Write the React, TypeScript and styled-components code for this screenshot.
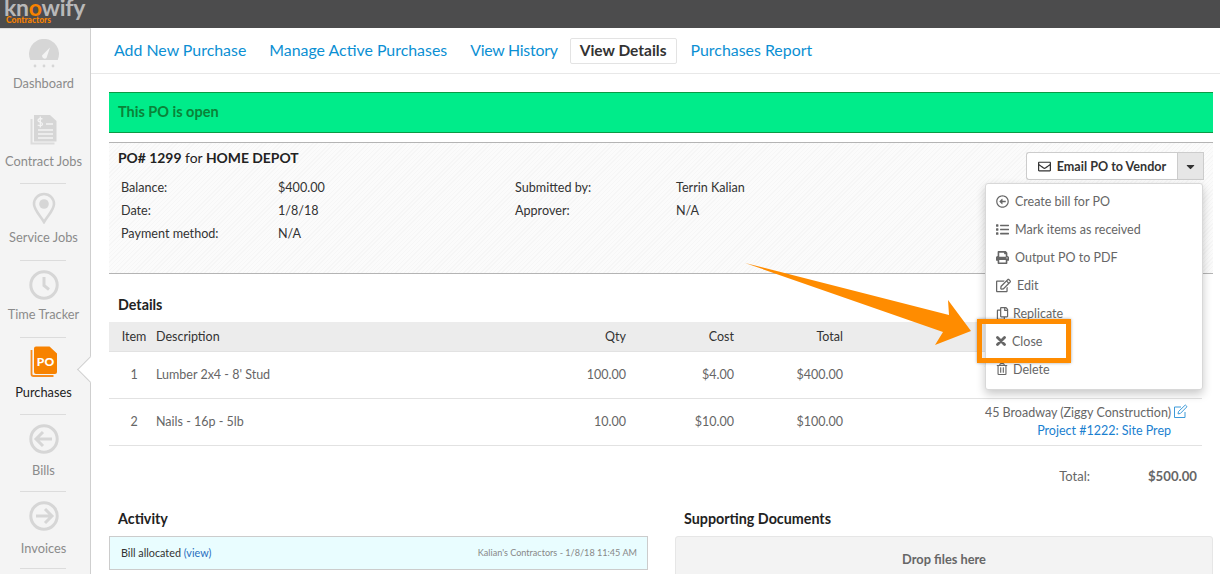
import React from "react";
import styled, { createGlobalStyle } from "styled-components";
import {
	FaCaretDown,
	FaList,
	FaPrint,
	FaRegArrowAltCircleLeft,
	FaRegCopy,
	FaRegEdit,
	FaRegEnvelope,
	FaRegTrashAlt,
} from "react-icons/fa";

const navItems = [
	{ label: "Dashboard", icon: <GaugeIcon />, pad: 8, gap: 4 },
	{ label: "Contract Jobs", icon: <ContractIcon />, pad: 7, gap: 6 },
	{ label: "Service Jobs", icon: <PinIcon />, pad: 8, gap: 4 },
	{ label: "Time Tracker", icon: <ClockIcon />, pad: 8, gap: 4 },
	{ label: "Purchases", icon: <PoIcon />, pad: 8, gap: 5, active: true },
	{ label: "Bills", icon: <ArrowCircleIcon dir="left" />, pad: 8, gap: 6 },
	{ label: "Invoices", icon: <ArrowCircleIcon dir="right" />, pad: 8, gap: 7 },
];

const tabs = ["Add New Purchase", "Manage Active Purchases", "View History", "View Details", "Purchases Report"];

const menuItems = [
	{ label: "Create bill for PO", icon: <FaRegArrowAltCircleLeft />, size: 13, gap: 6 },
	{ label: "Mark items as received", icon: <FaList />, size: 13, gap: 6 },
	{ label: "Output PO to PDF", icon: <FaPrint />, size: 13, gap: 6 },
	{ label: "Edit", icon: <FaRegEdit />, size: 15, gap: 6 },
	{ label: "Replicate", icon: <FaRegCopy />, size: 13, gap: 4 },
	{ label: "Close", icon: <CrossIcon />, size: 10, gap: 6 },
	{ label: "Delete", icon: <FaRegTrashAlt />, size: 12, gap: 5 },
];

function CrossIcon() {
	return (
		<svg viewBox="0 0 10 10" width="10" height="10">
			<path d="M1.500 1.500l7 7M8.500 1.500l-7 7" stroke="currentColor" strokeWidth="2.800" strokeLinecap="round" />
		</svg>
	);
}

function GaugeIcon() {
	return (
		<svg width="30" height="30" viewBox="0 0 30 30">
			<path d="M1.300 21A15 15 0 1 1 28.700 21z" fill="#d6d6d6" />
			<path d="M13 16.500l8-8-3.500 10.500a2.800 2.800 0 0 1-4.500-2.500z" fill="#f4f4f4" />
			<circle cx="6" cy="27" r="1.400" fill="#d6d6d6" />
			<circle cx="15" cy="27" r="1.400" fill="#d6d6d6" />
			<circle cx="24" cy="27" r="1.400" fill="#d6d6d6" />
		</svg>
	);
}

function ContractIcon() {
	return (
		<svg width="30" height="32" viewBox="0 0 30 32">
			<path d="M2.500 5v24.500h23" fill="none" stroke="#dcdcdc" strokeWidth="2" />
			<path d="M5 1h16l6.500 6v20.500H5z" fill="#d6d6d6" />
			<path d="M17 10h7M9 16h15M9 20h15M9 24h15" stroke="#f4f4f4" strokeWidth="1.700" />
			<path d="M13.500 5c-2-1-4.500-.5-4.500 1.500s4.500 1.500 4.500 3.500-2.800 2-4.800 1M11.300 2.500v11" fill="none" stroke="#f4f4f4" strokeWidth="1.300" />
		</svg>
	);
}

function PinIcon() {
	return (
		<svg width="24" height="32" viewBox="0 0 24 32">
			<path d="M12 30C8 23 2 18 2 12a10 10 0 0 1 20 0c0 6-6 11-10 18z" fill="none" stroke="#d6d6d6" strokeWidth="2.600" />
			<circle cx="12" cy="12" r="4.800" fill="#d6d6d6" />
		</svg>
	);
}

function ClockIcon() {
	return (
		<svg width="30" height="30" viewBox="0 0 30 30">
			<circle cx="15" cy="15" r="13.200" fill="none" stroke="#d6d6d6" strokeWidth="3" />
			<path d="M15 7v8.500l5 4" fill="none" stroke="#d6d6d6" strokeWidth="3" />
		</svg>
	);
}

function PoIcon() {
	return (
		<svg width="28" height="32" viewBox="0 0 28 32">
			<path d="M1.500 4v24a2 2 0 0 0 2 2h20" fill="none" stroke="#f78c1e" strokeWidth="1.800" />
			<path d="M6 .5h13.500l7.500 7V26a2 2 0 0 1-2 2H6a2 2 0 0 1-2-2V2.500a2 2 0 0 1 2-2z" fill="#f78200" />
			<PoLabel x="15.500" y="19.500" textAnchor="middle">PO</PoLabel>
		</svg>
	);
}

function ArrowCircleIcon({ dir }: { dir: "left" | "right" }) {
	return (
		<svg width="30" height="30" viewBox="0 0 30 30">
			<circle cx="15" cy="15" r="13.200" fill="none" stroke="#d6d6d6" strokeWidth="3" />
			<path
				d={dir === "left" ? "M23 15H8M14 8l-7 7 7 7" : "M7 15h15M16 8l7 7-7 7"}
				fill="none"
				stroke="#d6d6d6"
				strokeWidth="3"
			/>
		</svg>
	);
}

function LineItem({ no, desc, qty, cost, total }: { no: number; desc: string; qty: string; cost: string; total: string }) {
	return (
		<Row>
			<ItemNo>{no}</ItemNo>
			<span>{desc}</span>
			<Num>{qty}</Num>
			<Num>{cost}</Num>
			<Num>{total}</Num>
			<Alloc>
				45 Broadway (Ziggy Construction)
				<AllocLink>Project #1222: Site Prep</AllocLink>
			</Alloc>
			<EditIcon>
				<svg width="15" height="15" viewBox="0 0 15 15">
					<path d="M12 8v5.500H1.500V3H8M5.500 7.500L12.300 1 14 2.700 7.300 9.500l-2.300.4z" fill="none" stroke="#3d9ad9" strokeWidth="1" />
				</svg>
			</EditIcon>
		</Row>
	);
}

export default function App() {
	return (
		<Page>
			<GlobalStyle />
			<TopBar>
				<Logo>
					<LogoWord>
						kn
						<LogoO>
							o
							<Crown width="10" height="4" viewBox="0 0 10 4">
								<path d="M0 0l2.500 2L5 0l2.500 2L10 0 9 4H1z" fill="#f78200" />
							</Crown>
						</LogoO>
						wify
					</LogoWord>
					<LogoSub>Contractors</LogoSub>
				</Logo>
			</TopBar>

			<Body>
				<Sidebar>
					{navItems.map((item) => (
						<NavItem key={item.label} $active={item.active} $pad={item.pad}>
							<NavIcon $gap={item.gap}>{item.icon}</NavIcon>
							{item.label}
						</NavItem>
					))}
				</Sidebar>

				<Main>
					<Tabs>
						{tabs.map((tab) => (
							<Tab key={tab} $active={tab === "View Details"}>{tab}</Tab>
						))}
					</Tabs>

					<Content>
						<Banner>This PO is open</Banner>

						<PoCard>
							<PoTitle><b>PO# 1299</b> for <b>HOME DEPOT</b></PoTitle>
							<Facts>
								<span>Balance:</span><span>$400.00</span><span>Submitted by:</span><span>Terrin Kalian</span>
								<span>Date:</span><span>1/8/18</span><span>Approver:</span><span>N/A</span>
								<span>Payment method:</span><span>N/A</span>
							</Facts>
							<EmailGroup>
								<EmailButton><FaRegEnvelope /> Email PO to Vendor</EmailButton>
								<CaretButton><FaCaretDown /></CaretButton>
							</EmailGroup>
							<Menu>
								{menuItems.map((item) => (
									<MenuItem key={item.label} $gap={item.gap} $size={item.size}>
										{item.icon}
										{item.label}
									</MenuItem>
								))}
							</Menu>
						</PoCard>

						<Heading $top={21}>Details</Heading>
						<Table>
							<HeadRow>
								<ItemNo>Item</ItemNo>
								<span>Description</span>
								<Num>Qty</Num>
								<Num>Cost</Num>
								<Num>Total</Num>
							</HeadRow>
							<LineItem no={1} desc="Lumber 2x4 - 8' Stud" qty="100.00" cost="$4.00" total="$400.00" />
							<LineItem no={2} desc="Nails - 16p - 5lb" qty="10.00" cost="$10.00" total="$100.00" />
						</Table>

						<TotalRow>
							<span>Total:</span>
							<b>$500.00</b>
						</TotalRow>

						<Columns>
							<div>
								<Heading $top={1}>Activity</Heading>
								<ActivityBox>
									<span>Bill allocated <ActivityLink>(view)</ActivityLink></span>
									<ActivityMeta>Kalian's Contractors - 1/8/18 11:45 AM</ActivityMeta>
								</ActivityBox>
							</div>
							<div>
								<Heading $top={1}>Supporting Documents</Heading>
								<DropBox>Drop files here</DropBox>
							</div>
						</Columns>
					</Content>
				</Main>
			</Body>

			<Callout width="340" height="110" viewBox="0 0 340 110">
				<polygon points="5,3 209,55 208,40 231,71 195,85 203,72" fill="#ff8c00" />
			</Callout>
			<Highlight />
		</Page>
	);
}

const GlobalStyle = createGlobalStyle`
	html, body {
		margin: 0;
		height: 100%;
		overflow: hidden;
		background: #fff;
	}
	body {
		font-family: Lato, "Liberation Sans", sans-serif;
		color: #333;
	}
`;

const Page = styled.div`
	position: relative;
	width: 1220px;
	height: 574px;
	overflow: hidden;
`;

const TopBar = styled.header`
	height: 28px;
	background: #4c4c4d;
	overflow: hidden;
`;

const Logo = styled.div`
	padding-left: 4px;
	margin-top: -4px;
`;

const LogoWord = styled.div`
	font-size: 23px;
	line-height: 23px;
	font-weight: 700;
	letter-spacing: -0.3px;
	color: #b8b8b8;
`;

const LogoO = styled.span`
	position: relative;
	color: #f78200;
`;

const Crown = styled.svg`
	position: absolute;
	left: 2px;
	top: 3px;
`;

const LogoSub = styled.div`
	font-size: 8.500px;
	line-height: 8px;
	font-weight: 900;
	color: #f78200;
	margin: -3px 0 0 2px;
`;

const Body = styled.div`
	display: flex;
	height: 546px;
`;

const Sidebar = styled.nav`
	position: relative;
	width: 90px;
	flex: none;
	background: #f4f4f4;
	border-right: 1px solid #cfcfcf;
	border-top: 1px solid #dcdcdc;
`;

const NavItem = styled.div<{ $active?: boolean; $pad: number }>`
	position: relative;
	height: 77px;
	box-sizing: border-box;
	padding: ${(p) => p.$pad}px 3px 0 0;
	display: flex;
	flex-direction: column;
	align-items: center;
	font-size: 12.800px;
	line-height: 16px;
	color: ${(p) => (p.$active ? "#222" : "#8b8b8b")};

	&:not(:first-child)::before {
		content: "";
		position: absolute;
		left: 20px;
		right: 24px;
		bottom: -1px;
		border-bottom: 1px solid #dcdcdc;
	}

	${(p) =>
		p.$active &&
		`
		&::after {
			content: "";
			position: absolute;
			right: -10px;
			top: 23px;
			width: 18px;
			height: 18px;
			background: #fff;
			border-left: 1px solid #cfcfcf;
			border-bottom: 1px solid #cfcfcf;
			transform: rotate(45deg);
		}
	`}
`;

const NavIcon = styled.div<{ $gap: number }>`
	height: 34px;
	margin-bottom: ${(p) => p.$gap}px;
	display: flex;
	align-items: center;
	justify-content: center;
`;

const PoLabel = styled.text`
	font-family: Lato, sans-serif;
	font-size: 12px;
	font-weight: 900;
	fill: #fff;
`;

const Main = styled.main`
	flex: 1;
	min-width: 0;
`;

const Tabs = styled.div`
	height: 45px;
	padding-left: 12px;
	display: flex;
	align-items: center;
	gap: 1px;
	border-bottom: 1px solid #e8e8e8;
`;

const Tab = styled.a<{ $active?: boolean }>`
	padding: 0 ${(p) => (p.$active ? 9 : 10)}px;
	height: 24px;
	line-height: 22px;
	font-size: ${(p) => (p.$active ? 15.5 : 15.9)}px;
	color: ${(p) => (p.$active ? "#333" : "#0b8fd3")};
	font-weight: ${(p) => (p.$active ? 700 : 400)};
	border: 1px solid ${(p) => (p.$active ? "#e3e3e3" : "transparent")};
	border-radius: 2px;

	&:nth-child(3) {
		letter-spacing: -0.25px;
	}

	&:last-child {
		margin-left: 2px;
	}
`;

const Content = styled.div`
	padding: 18px 7px 0 18px;
`;

const Banner = styled.div`
	height: 41px;
	box-sizing: border-box;
	padding: 0 0 2px 9px;
	display: flex;
	align-items: center;
	background: #00ec8a;
	border-top: 1px solid #0c9a44;
	border-bottom: 1px solid #0c9a44;
	color: #0a8238;
	font-size: 14.500px;
	font-weight: 700;
`;

const PoCard = styled.section`
	position: relative;
	height: 132px;
	box-sizing: border-box;
	margin-top: 9px;
	padding: 5px 9px 0;
	border-top: 1px solid #b4b4b4;
	border-bottom: 1px solid #b4b4b4;
	background: repeating-linear-gradient(135deg, #f6f6f6 0 1px, #fbfbfb 1px 3px);
`;

const PoTitle = styled.div`
	font-size: 13.900px;
	line-height: 20px;
	color: #222;
`;

const Facts = styled.div`
	margin: 8px 0 0 3px;
	display: grid;
	grid-template-columns: 157px 237px 161px auto;
	grid-auto-rows: 23px;
	align-items: center;
	font-size: 12.600px;
	color: #333;
`;

const EmailGroup = styled.div`
	position: absolute;
	top: 9px;
	right: 9px;
	display: flex;
	height: 28px;
`;

const EmailButton = styled.button`
	width: 151px;
	padding: 0;
	display: flex;
	align-items: center;
	justify-content: center;
	gap: 6px;
	background: #fff;
	border: 1px solid #ccc;
	border-right: none;
	border-radius: 3px 0 0 3px;
	font: 700 12.600px Lato, sans-serif;
	color: #333;

	svg {
		font-size: 13px;
	}
`;

const CaretButton = styled.button`
	width: 27px;
	padding: 0;
	display: flex;
	align-items: center;
	justify-content: center;
	background: #e6e6e6;
	border: 1px solid #ccc;
	color: #333;
	font-size: 13px;
`;

const Menu = styled.div`
	position: absolute;
	z-index: 2;
	top: 40px;
	right: 10px;
	width: 218px;
	box-sizing: border-box;
	padding: 3px 0 6px;
	background: #fff;
	border: 1px solid #d8d8d8;
	border-radius: 3px;
	box-shadow: 0 4px 10px rgba(0, 0, 0, 0.22);
`;

const MenuItem = styled.div<{ $gap: number; $size: number }>`
	height: 28px;
	padding-left: 10px;
	display: flex;
	align-items: center;
	gap: ${(p) => p.$gap}px;
	font-size: 12.500px;
	color: #666;

	svg {
		flex: none;
		font-size: ${(p) => p.$size}px;
		color: #666;
	}
`;

const Heading = styled.h3<{ $top: number }>`
	margin: ${(p) => p.$top}px 0 7px 9px;
	font-size: 14.300px;
	line-height: 20px;
	font-weight: 700;
	color: #222;
`;

const Table = styled.div`
	width: 1093px;
	font-size: 12.500px;
`;

const Row = styled.div`
	display: grid;
	grid-template-columns: 47px 390px 80px 108px 109px 328px 31px;
	align-items: center;
	height: 47px;
	box-sizing: border-box;
	padding-bottom: 2px;
	border-bottom: 1px solid #e2e2e2;
	color: #666;
`;

const HeadRow = styled(Row)`
	height: 30px;
	padding-bottom: 0;
	background: #ececec;
	color: #333;
`;

const ItemNo = styled.span`
	text-align: center;
	padding-left: 3px;
`;

const Num = styled.span`
	text-align: right;
`;

const Alloc = styled.div`
	text-align: right;
	line-height: 18px;
	margin-top: 2px;
`;

const AllocLink = styled.div`
	color: #1a7fd0;
`;

const EditIcon = styled.span`
	align-self: start;
	padding: 5px 0 0 2px;
`;

const TotalRow = styled.div`
	margin-top: 20px;
	height: 20px;
	padding-right: 16px;
	display: flex;
	justify-content: flex-end;
	align-items: center;
	gap: 58px;
	font-size: 13px;
	color: #666;

	b {
		font-size: 13.200px;
		font-weight: 700;
	}
`;

const Columns = styled.div`
	margin-top: 22px;
	display: grid;
	grid-template-columns: 539px 538px;
	gap: 27px;
`;

const ActivityBox = styled.div`
	height: 34px;
	box-sizing: border-box;
	padding: 0 10px 2px 11px;
	display: flex;
	align-items: center;
	justify-content: space-between;
	background: #e9fdff;
	border: 1px solid #cccccc;
	font-size: 10.800px;
	color: #333;
`;

const ActivityLink = styled.span`
	color: #2a6fc0;
`;

const ActivityMeta = styled.span`
	font-size: 9.100px;
	color: #888;
`;

const DropBox = styled.div`
	height: 60px;
	box-sizing: border-box;
	padding-top: 14px;
	text-align: center;
	background: #f3f3f3;
	border: 1px solid #e6e6e6;
	border-radius: 3px;
	font-size: 12.800px;
	font-weight: 700;
	color: #666;
`;

const Callout = styled.svg`
	position: absolute;
	z-index: 3;
	left: 740px;
	top: 260px;
`;

const Highlight = styled.div`
	position: absolute;
	z-index: 3;
	left: 977px;
	top: 319px;
	width: 94px;
	height: 44px;
	box-sizing: border-box;
	border: 5px solid #ff8c00;
	box-shadow: 0 0 3px rgba(0, 0, 0, 0.35);
`;
